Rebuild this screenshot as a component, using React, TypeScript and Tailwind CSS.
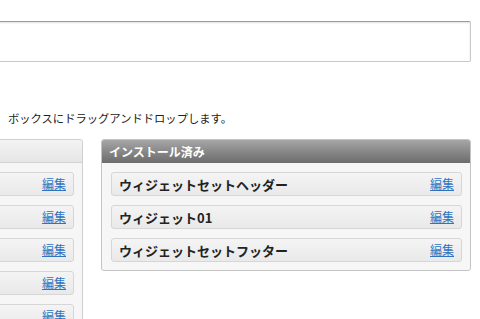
import React from 'react';

const font = { fontFamily: '"Noto Sans CJK JP", "Liberation Sans", sans-serif' };

// ウィジェット一覧の行
function WidgetRow({ label }: { label?: string }) {
  return (
    <div className="flex h-[24px] items-center justify-between rounded-[3px] border border-[#d6d6d6] bg-gradient-to-b from-[#f4f4f4] to-[#e9e9e9] pl-[7px] pr-[7px]">
      <span className="text-[13px] font-bold leading-none text-[#222]">{label}</span>
      <a href="#" className="text-[12px] leading-none text-[#2f74c0] underline">
        編集
      </a>
    </div>
  );
}

export default function App() {
  const available = ['', '', '', '', ''];
  const installed = ['ウィジェットセットヘッダー', 'ウィジェット01', 'ウィジェットセットフッター'];

  return (
    <div className="h-[319px] w-[480px] overflow-hidden bg-white" style={font}>
      <div className="pt-[21px]">
        {/* 入力欄 */}
        <div className="ml-[-30px] h-[41px] w-[501px] rounded-[2px] border border-[#c8c8c8] border-t-[#9a9a9a] bg-white shadow-[inset_0_1px_2px_rgba(0,0,0,0.12)]" />
      </div>

      <p className="mt-[48px] pl-[8px] text-[11.3px] leading-[16px] text-[#222]">
        ボックスにドラッグアンドドロップします。
      </p>

      {/* パネル */}
      <div className="ml-[-178px] mt-[13px] flex items-start gap-[18px]">
        <div className="w-[261px] rounded-[3px] border border-[#cfcfcf] bg-[#f6f6f6]">
          <div className="h-[23px] rounded-t-[3px] border-b border-[#d2d2d2] bg-gradient-to-b from-[#f3f3f3] to-[#e6e6e6]" />
          <div className="flex flex-col gap-[9px] pb-[10px] pl-[10px] pr-[8px] pt-[9px]">
            {available.map((l, i) => (
              <WidgetRow key={i} label={l} />
            ))}
          </div>
        </div>

        <div className="w-[370px] rounded-[3px] border border-[#c4c4c4] bg-[#f6f6f6]">
          <div className="flex h-[23px] items-center rounded-t-[2px] bg-gradient-to-b from-[#a6a6a6] to-[#6c6c6c] pl-[7px]">
            <span className="text-[12px] font-bold leading-none text-white">インストール済み</span>
          </div>
          <div className="flex flex-col gap-[9px] pb-[8px] pl-[9px] pr-[8px] pt-[9px]">
            {installed.map((l) => (
              <WidgetRow key={l} label={l} />
            ))}
          </div>
        </div>
      </div>
    </div>
  );
}
